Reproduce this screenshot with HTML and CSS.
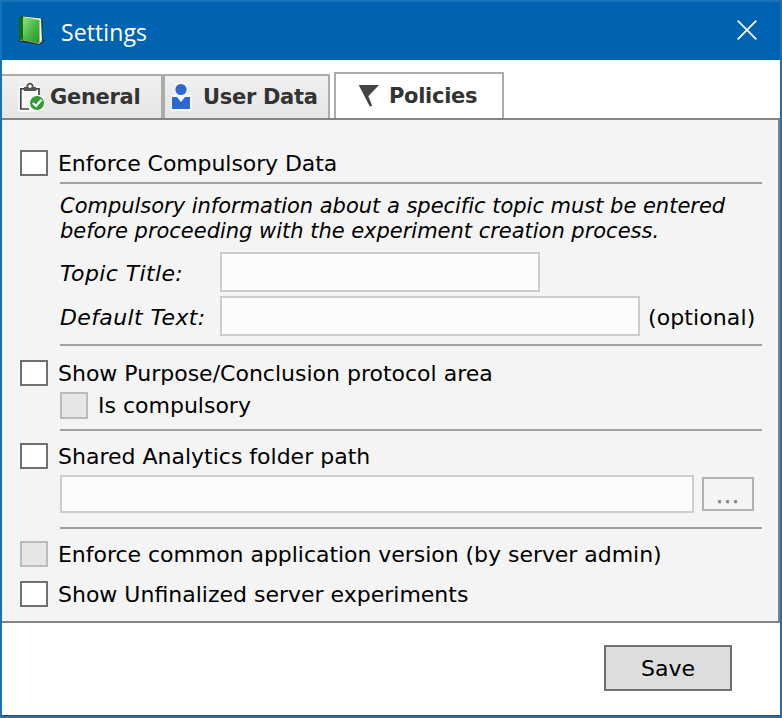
FILE: index.html
```html
<!DOCTYPE html>
<html lang="en">
<head>
<meta charset="utf-8">
<title>Settings</title>
<link rel="stylesheet" href="styles.css">
</head>
<body>
<div class="window">
  <header class="titlebar">
    <svg class="book" width="28" height="30" viewBox="0 0 28 30">
      <defs><linearGradient id="cover" x1="0" y1="0" x2="1" y2="1"><stop offset="0" stop-color="#8fe582"/><stop offset=".5" stop-color="#4db847"/><stop offset="1" stop-color="#269722"/></linearGradient></defs>
      <path d="M20 29L27 24L23 23Z" fill="#073f75"/>
      <path d="M0 2L3 0L22 2L23.5 4V26L21 29L0 25.5Z" fill="#123c14"/>
      <path d="M4 .5L22 2.5L23 25L20 28Z" fill="#f2f5ef"/>
      <path d="M0 2L4 1L4 24L0 24Z" fill="#116c16"/>
      <path d="M4 1L20.5 4V27L4 23.5Z" fill="url(#cover)"/>
      <path d="M1 24.5L4 24L20 27.5" fill="none" stroke="#c4dbc2" stroke-width=".7"/>
    </svg>
    <h1 class="title">Settings</h1>
    <svg class="close" width="20" height="20" viewBox="0 0 20 20"><path d="M.7.7L19.3 19.3M19.3.7L.7 19.3" stroke="#fff" stroke-width="1.7"/></svg>
  </header>
  <nav class="tabs">
    <div class="tab tab-general">
      <svg width="26" height="30" viewBox="0 0 26 30">
        <path d="M0 4H7V0H17V4H22V14H26V28H19V30H0Z" fill="#f8f8f8"/>
        <path d="M11 27H2.8V6.8H21V13" fill="none" stroke="#444" stroke-width="1.7"/>
        <path d="M6 9V5H8.2C8.2-.8 15.8-.8 15.8 5H18V9Z" fill="#555"/><circle cx="12" cy="4.2" r="1.7" fill="#fff"/>
        <circle cx="19" cy="21" r="7" fill="#339b35"/><path d="M14.8 21L18 24L23.5 17.7" fill="none" stroke="#fff" stroke-width="2.2"/>
      </svg>
      <span>General</span>
    </div>
    <div class="tab tab-user">
      <svg width="22" height="28" viewBox="0 0 22 28">
        <path d="M1 12H5V0H17V12H22V28H1Z" fill="#f7f7f7"/><circle cx="11" cy="6.5" r="5.6" fill="#2f67d2"/>
        <path d="M2 14H7L11 19L15 14H20V26H2Z" fill="#2f67d2"/>
      </svg>
      <span>User Data</span>
    </div>
    <div class="tab tab-policies">
      <svg width="22" height="24" viewBox="0 0 22 24"><path d="M.7 1H21L10.3 12.2L14.2 21.8L11.8 22.5Z" fill="#444"/></svg>
      <span>Policies</span>
    </div>
  </nav>
  <main class="panel">
    <div class="row"><span class="check"></span><span class="t-enforce">Enforce Compulsory Data</span></div>
    <hr class="rule rule-first">
    <p class="note">Compulsory information about a specific topic must be entered<br>before proceeding with the experiment creation process.</p>
    <div class="field"><span class="label">Topic Title:</span><span class="input input-topic"></span></div>
    <div class="field"><span class="label">Default Text:</span><span class="input input-default"></span><span class="optional">(optional)</span></div>
    <hr class="rule rule-default">
    <div class="row"><span class="check"></span><span>Show Purpose/Conclusion protocol area</span></div>
    <div class="row row-sub"><span class="check check-off"></span><span>Is compulsory</span></div>
    <hr class="rule rule-sub">
    <div class="row"><span class="check"></span><span>Shared Analytics folder path</span></div>
    <div class="path"><span class="input input-path"></span><span class="browse">...</span></div>
    <hr class="rule rule-path">
    <div class="row"><span class="check check-off"></span><span class="t-common">Enforce common application version (by server admin)</span></div>
    <div class="row row-last"><span class="check"></span><span>Show Unfinalized server experiments</span></div>
  </main>
  <footer class="footer"><span class="save">Save</span></footer>
</div>
</body>
</html>
```
FILE: styles.css
```css
* { box-sizing: border-box; }
body { margin: 0; font: 22px/26px "DejaVu Sans", sans-serif; color: #000; }
.window { width: 782px; height: 718px; border: 2px solid #1872b8; background: #fff; display: flex; flex-direction: column; white-space: nowrap; }
.titlebar { height: 58px; background: #0063b1; display: flex; align-items: center; padding: 0 23px 2px 17px; flex: none; }
.book { margin-top: 2px; }
.title { margin: 3px auto 0 14px; font: 400 23px/30px "Open Sans", "Noto Sans", sans-serif; letter-spacing: .1px; color: #fff; }
.tabs { display: flex; align-items: flex-end; height: 58px; flex: none; font-size: 21px; font-weight: 700; letter-spacing: -.3px; color: #333; }
.tab { display: flex; align-items: center; height: 44px; border: 2px solid #acacac; border-bottom: 0; background: linear-gradient(#f0f0f0, #e5e5e5); }
.tab-general { width: 161px; border-left: 0; padding-left: 16px; gap: 6px; }
.tab-user { width: 167px; padding-left: 5px; gap: 11px; }
.tab-policies { width: 170px; height: 46px; margin-left: 4px; background: #fff; padding-left: 22px; gap: 9px; }
.panel { height: 505px; flex: none; border: 2px solid #838383; border-left: 0; background: #f4f4f4; padding: 30px 16px 0 18px; }
.row { display: flex; align-items: center; height: 26px; gap: 10px; }
.row > :last-child { padding-top: 2px; }
.row-sub { height: 27px; margin: 6px 0 0 40px; }
.row-sub > :last-child { padding-top: 0; }
.row-last { margin-top: 14px; }
.check { width: 28px; height: 100%; border: 2px solid #707070; background: #fff; flex: none; }
.check-off { border-color: #bcbcbc; background: #e6e6e6; }
.rule { height: 2px; border: 0; background: #a0a0a0; margin: 0 0 0 40px; }
.rule-first { margin-top: 6px; }
.field + .rule-default { margin-top: 8px; margin-bottom: 14px; }
.rule-sub { margin-top: 10px; margin-bottom: 12px; }
.rule-path { margin-top: 14px; margin-bottom: 12px; }
.note { margin: 10px 0 8px 40px; font-size: 21px; font-style: italic; line-height: 25px; letter-spacing: -.02px; }
.t-enforce { letter-spacing: -.08px; }
.t-common { letter-spacing: -.04px; }
.field { display: flex; align-items: center; height: 40px; margin: 0 0 4px 40px; }
.label { width: 160px; font-style: italic; padding-top: 4px; letter-spacing: .38px; }
.input { height: 100%; border: 2px solid #cccdd1; background: #fcfcfc; }
.input-topic { width: 320px; }
.input-default { width: 420px; margin-right: 8px; }
.optional { padding-top: 4px; letter-spacing: .1px; }
.path { display: flex; align-items: center; height: 38px; margin: 6px 0 0 40px; gap: 8px; }
.input-path { width: 634px; }
.browse { width: 52px; height: 34px; border: 2px solid #adb2b5; color: #838383; text-align: center; line-height: 34px; letter-spacing: 1px; -webkit-text-stroke: .5px #838383; }
.footer { flex: 1; border-bottom: 1px solid #444; display: flex; justify-content: flex-end; padding: 22px 48px 0 0; }
.save { width: 128px; height: 46px; border: 2px solid #707070; background: #ddd; display: flex; align-items: center; justify-content: center; padding-top: 2px; }
```
